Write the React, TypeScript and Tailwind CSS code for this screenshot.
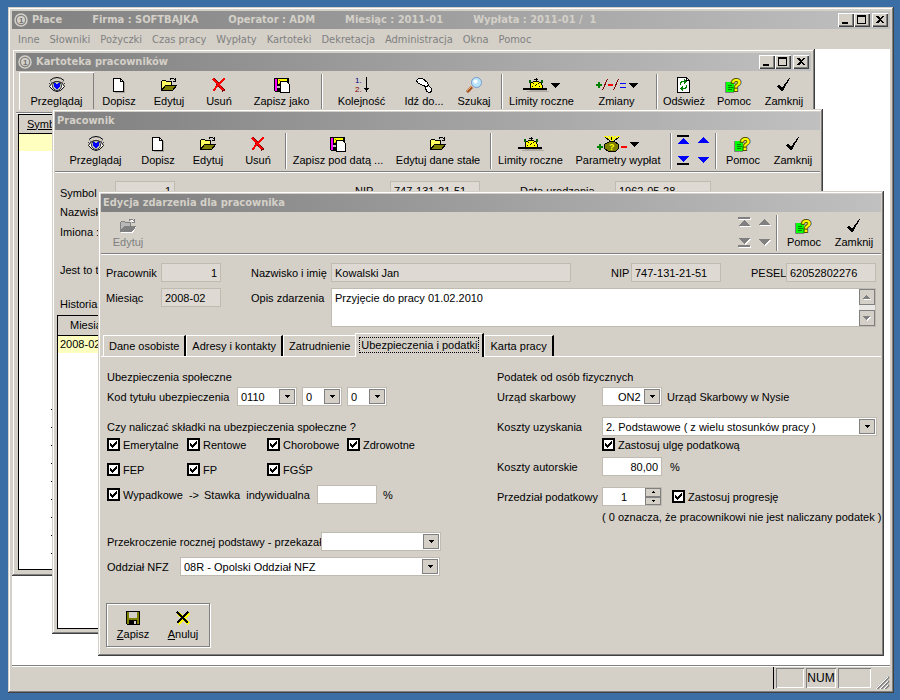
import { ReactNode } from "react";
import clsx from "clsx";

const raised = "shadow-[inset_1px_1px_#fff,inset_-1px_-1px_#404040,inset_-2px_-2px_#808080]";
const frame = "bg-[#d4d0c8] shadow-[inset_-1px_-1px_#404040,inset_1px_1px_#d4d0c8,inset_-2px_-2px_#808080,inset_2px_2px_#fff]";
const fieldBase = "h-[19px] border border-[#bfbbb0] px-[3px] outline-none";

/* ---------- icons ---------- */

function Svg({ w = 16, children }: { w?: number; children: ReactNode }) {
    return (
        <svg width={w} height={16} viewBox={`0 0 ${w} 16`} shapeRendering="crispEdges" fill="none">
            {children}
        </svg>
    );
}

function EyeIcon() {
    return (
        <svg width="16" height="16" viewBox="0 0 16 16" fill="none">
            <path d="M1 3.500Q4 0.500 8 0.500T15 3.500" stroke="#000" />
            <path d="M0.500 9.500Q3 4.500 8 4.500T15.500 9.500Q12 14.500 8 14.500T0.500 9.500Z" fill="#fff" stroke="#000" />
            <circle cx="8" cy="9" r="4.500" fill="#c0c0c0" stroke="#303030" />
            <path shapeRendering="crispEdges" d="M5 6h2v1h2v-1h2v4h-1v1h-1v1h-2v-1h-1v-1h-1z" fill="#00f" />
            <path d="M0 6L2 8M16 6L14 8M2 4.500L4 6.500M14 4.500L12 6.500" stroke="#404040" />
        </svg>
    );
}

function PageIcon() {
    return (
        <Svg w={12}>
            <path d="M2 15.500H11.500V5" stroke="#a8a49c" />
            <path d="M0.500 1.500H7.500L10.500 4.500V14.500H0.500Z" fill="#fff" stroke="#000" />
            <path d="M7.500 1.500V4.500H10.500" stroke="#000" />
        </Svg>
    );
}

function FolderIcon({ disabled = false }: { disabled?: boolean }) {
    const line = disabled ? "#808080" : "#000";
    return (
        <Svg>
            {disabled && <path d="M1 14.500H12.500L16 8.500M10 3.500L12 2.500L15 5" stroke="#fff" />}
            <path d="M0.500 13.500V4.500L1.500 3.500H4.500L5.500 4.500H10.500V8" fill={disabled ? "#b8b8b8" : "#ffff60"} stroke={line} />
            <path d="M0.500 13.500L4.500 8.500H15.500L11.500 13.500Z" fill={disabled ? "#808080" : "#808000"} stroke={line} />
            <path d="M9 2.500L10 1.500H12.500L14.500 3.500M14.500 1V4.500H11.500" stroke={line} />
        </Svg>
    );
}

function DeleteIcon() {
    return (
        <Svg w={14}>
            <path d="M1.500 2L6 7L12 14" stroke="#800000" strokeWidth="3" />
            <path d="M1 2L6 7L11 13M13 1.500L9 5L5 9L1.500 14" stroke="#f00" strokeWidth="2" />
        </Svg>
    );
}

function SaveAsIcon() {
    return (
        <Svg>
            <path d="M0.500 1.500H14.500V14.500H1.500L0.500 13.500Z" fill="#000" stroke="#000" />
            <path d="M1 2H3V14H1Z" fill="#f0f" />
            <path d="M4 2H13V7H4Z" fill="#ff0" />
            <path d="M5 3.500H6M8 4.500H9M5 6.500H6" stroke="#808000" />
            <path d="M3 9H6V11H3Z" fill="#c0c0c0" />
            <path d="M6.500 4.500H12.500L15.500 7.500V15.500H6.500Z" fill="#fff" stroke="#000" />
        </Svg>
    );
}

function SortIcon() {
    return (
        <svg width="14" height="20" viewBox="0 -1 14 20" shapeRendering="crispEdges">
            <text x="0" y="7" fontSize="8" fontFamily="Liberation Sans" fill="#000080">1.</text>
            <text x="0" y="16" fontSize="8" fontFamily="Liberation Sans" fill="#800000">2.</text>
            <path d="M11 1H12V12H14L11.500 16L9 12H11Z" />
        </svg>
    );
}

function FootIcon() {
    return (
        <Svg>
            <path d="M0.500 3.500L2.500 1.500H6.500L11.500 5.500L12.500 8.500L10.500 9.500L6.500 8.500L1.500 5.500Z" fill="#fff" stroke="#000" />
            <path d="M9.500 10.500L12.500 8.500L15.500 11.500V14.500L13.500 15.500L10.500 14.500Z" fill="#fff" stroke="#000" />
        </Svg>
    );
}

function SearchIcon() {
    return (
        <svg width="16" height="16" viewBox="0 0 16 16" fill="none">
            <path d="M1 15L6 10" stroke="#a05020" strokeWidth="3" />
            <path d="M1 14L5.500 9.500" stroke="#f0a060" />
            <circle cx="10.500" cy="5.500" r="5" fill="#b8e4fc" stroke="#7898c8" />
            <circle cx="9.500" cy="4.500" r="2" fill="#fff" />
        </svg>
    );
}

function LimitsIcon() {
    return (
        <Svg w={26}>
            <path d="M4 14.500H26M7 13.500H24" stroke="#b0aca4" />
            <path d="M7 11V8L8 6L10 4.500H16L18 6L19 8V11Z" fill="#ff0" />
            <path d="M7 11V8M7.500 8V6M8 5.500H10M10 4.500H16M16 5.500H18M18.500 6V8M19 8V11M11 2.500H15M13 1V4" stroke="#000" />
            <path d="M0 11H24V13H0Z" fill="#000" />
            <path d="M10.500 6V7M15.500 6V7M9 9.500H10M16 9.500H17M14 7L12 9" stroke="#000" />
            <path d="M6 3H8V6H6ZM18 3H20V6H18Z" fill="#006000" />
        </Svg>
    );
}

function ChangesIcon() {
    return (
        <Svg w={31}>
            <path d="M0 8H6M3 5V11" stroke="#008000" strokeWidth="2" />
            <path d="M6.500 13L11.500 2M17.500 13L22.500 2" stroke="#800000" />
            <path d="M12 8H17" stroke="#f00" strokeWidth="2" />
            <path d="M24 6.500H30M24 10.500H30" stroke="#00f" />
        </Svg>
    );
}

function RefreshIcon() {
    return (
        <Svg w={14}>
            <path d="M0.500 0.500H9.500L12.500 3.500V15.500H0.500Z" fill="#fff" stroke="#000" />
            <path d="M9.500 0.500V3.500H12.500" stroke="#000" />
            <path d="M3.500 8V6L5 4.500H8M9.500 8V10L8 11.500H5" stroke="#008000" />
            <path d="M7 2V7L10 4.500ZM6 9V14L3 11.500Z" fill="#008000" />
        </Svg>
    );
}

function HelpIcon() {
    return (
        <svg width="18" height="22" viewBox="0 -3 18 22" fill="none">
            <path d="M1 5H9V16H1Z" fill="#0f0" />
            <path d="M0.500 5V15.500H9" stroke="#808080" />
            <path d="M3 8.500H7M3 10.500H8M3 12.500H7" stroke="#008000" />
            <text x="6" y="14" fontSize="17" fontWeight="bold" fontFamily="Liberation Sans" fill="#ff0" stroke="#505000" strokeWidth="2" paintOrder="stroke">?</text>
        </svg>
    );
}

function CheckIcon() {
    return (
        <Svg w={14}>
            <path d="M0 9L2 8L5 11L12 1H13L6 14H4Z" fill="#000" />
        </Svg>
    );
}

function BagIcon() {
    return (
        <Svg w={31}>
            <path d="M0 11H6M3 8V14" stroke="#008000" strokeWidth="2" />
            <path d="M8 0L12 4M12 0L14 4M18 0L16 4M22 0L18 4M15 0V5" stroke="#ff0" strokeWidth="2" />
            <path d="M8 1L13 5M22 1L17 5M14 1L15 4" stroke="#000" />
            <path d="M12.500 5.500H17.500L21.500 8.500V12.500L18.500 15.500H11.500L7.500 12.500V8.500Z" fill="#808000" stroke="#000" />
            <text x="12" y="14" fontSize="9" fontWeight="bold" fontFamily="Liberation Sans" fill="#ff0">?</text>
            <path d="M24 11H30" stroke="#f00" strokeWidth="2" />
        </Svg>
    );
}

function FloppyIcon() {
    return (
        <Svg w={14}>
            <path d="M0.500 1.500H13.500V14.500H1.500L0.500 13.500Z" fill="#808000" stroke="#000" />
            <path d="M3 2H11V8H3Z" fill="#d4d0c8" />
            <path d="M3 10H11V15H3Z" fill="#000" />
            <path d="M8 11H10V14H8Z" fill="#d4d0c8" />
        </Svg>
    );
}

function CancelIcon() {
    return (
        <Svg w={14}>
            <path d="M2 3L13 14M13 3L2 14" stroke="#ff0" strokeWidth="3" />
            <path d="M1 2L12 13M12 2L1 13" stroke="#000" strokeWidth="2" />
        </Svg>
    );
}

function DropArrow() {
    return (
        <svg width="9" height="5" viewBox="0 0 9 5" shapeRendering="crispEdges">
            <path d="M0 0H9L4.500 5Z" />
        </svg>
    );
}

function OneIcon() {
    return (
        <svg width="14" height="14" viewBox="0 0 14 14">
            <circle cx="7" cy="7" r="6" fill="none" stroke="#d4d0c8" strokeWidth="1.500" />
            <circle cx="7" cy="7" r="4" fill="#d4d0c8" />
            <text x="5" y="10" fontSize="8" fontWeight="bold" fontFamily="Liberation Sans" fill="#707070">1</text>
        </svg>
    );
}

const arrowPaths = {
    first: "M0 0H12V2H0ZM6 3L12 9H0Z",
    prev: "M6 2L12 8H0Z",
    last: "M0 8H12V10H0ZM0 1H12L6 7Z",
    next: "M0 2H12L6 8Z",
};

function NavArrow({ kind, disabled, label }: { kind: keyof typeof arrowPaths; disabled: boolean; label: string }) {
    const edge = kind === "first" || kind === "last";
    return (
        <button aria-label={label} className="flex h-[19px] w-5 items-center justify-center">
            <svg width="13" height="11" viewBox="0 0 13 11" shapeRendering="crispEdges">
                {disabled && <path d={arrowPaths[kind]} transform="translate(1 1)" fill="#fff" />}
                <path d={arrowPaths[kind]} fill={disabled ? "#808080" : "#00f"} />
                {edge && !disabled && <path d={kind === "first" ? "M0 0H12V2H0Z" : "M0 8H12V10H0Z"} />}
            </svg>
        </button>
    );
}

function NavArrows({ disabled = false }: { disabled?: boolean }) {
    return (
        <div className="grid w-10 grid-cols-2 content-between pb-0.5">
            <NavArrow kind="first" disabled={disabled} label="Pierwszy" />
            <NavArrow kind="prev" disabled={disabled} label="Poprzedni" />
            <NavArrow kind="last" disabled={disabled} label="Ostatni" />
            <NavArrow kind="next" disabled={disabled} label="Następny" />
        </div>
    );
}

/* ---------- window parts ---------- */

function WindowButtons() {
    const button = clsx("flex h-[14px] w-4 items-center justify-center bg-[#d4d0c8]", raised);
    return (
        <div className="ml-auto flex">
            <button className={button} aria-label="Minimalizuj">
                <svg width="10" height="10" shapeRendering="crispEdges"><path d="M1 7H7V9H1Z" /></svg>
            </button>
            <button className={button} aria-label="Maksymalizuj">
                <svg width="10" height="10" shapeRendering="crispEdges"><path d="M0 0H9V9H0ZM1 2V8H8V2Z" fillRule="evenodd" /></svg>
            </button>
            <button className={clsx(button, "ml-0.5")} aria-label="Zamknij">
                <svg width="10" height="10" shapeRendering="crispEdges"><path d="M1 1H3L5 3L7 1H9L6 4.500L9 8H7L5 6L3 8H1L4 4.500Z" /></svg>
            </button>
        </div>
    );
}

function TitleBar({ children, controls = false }: { children: ReactNode; controls?: boolean }) {
    return (
        <div className="flex h-[18px] shrink-0 items-center bg-linear-to-r from-[#808080] to-[#c0c0c0] px-0.5 font-['DejaVu_Sans_Condensed','DejaVu_Sans',sans-serif] font-bold text-[#d4d0c8]">
            {children}
            {controls && <WindowButtons />}
        </div>
    );
}

function Toolbar({ children }: { children: ReactNode }) {
    return (
        <div className="flex h-[43px] shrink-0 border-b border-white pt-px shadow-[inset_0_-1px_#808080]">
            {children}
        </div>
    );
}

function Separator() {
    return <div className="mx-0.5 mt-0.5 h-9 w-px bg-[#808080] shadow-[1px_0_#fff]" />;
}

type ToolProps = { icon: ReactNode; label: ReactNode; size?: string; drop?: boolean; className?: string };

function Tool({ icon, label, size = "w-[50px]", drop, className }: ToolProps) {
    return (
        <button className={clsx("flex h-[38px] shrink-0 flex-col items-center gap-px pt-[5px] leading-[14px] whitespace-nowrap", size, className)}>
            <span className="flex h-4 items-center gap-0.5">
                {icon}
                {drop && <DropArrow />}
            </span>
            <span>{label}</span>
        </button>
    );
}

/* ---------- form parts ---------- */

type FieldProps = { id: string; label: string; value: string; labelSize: string; size: string; right?: boolean; disabled?: boolean };

function Field({ id, label, value, labelSize, size, right, disabled = true }: FieldProps) {
    return (
        <div className="flex items-center">
            <label htmlFor={id} className={clsx("whitespace-nowrap", labelSize)}>{label}</label>
            <input
                id={id}
                readOnly={disabled}
                defaultValue={value}
                className={clsx(fieldBase, size, right && "text-right", disabled ? "bg-[#dedad3]" : "bg-white")}
            />
        </div>
    );
}

function Select({ id, value, size, label, right }: { id: string; value: string; size: string; label?: string; right?: boolean }) {
    return (
        <div className={clsx("relative", size)}>
            <select
                id={id}
                aria-label={label}
                defaultValue={value}
                className={clsx(fieldBase, "block w-full appearance-none bg-white", right && "pl-[15px]")}
            >
                <option>{value}</option>
            </select>
            <span className="pointer-events-none absolute top-0.5 right-0.5 flex h-[15px] w-4 items-center justify-center border border-[#808080] bg-[#d4d0c8]">
                <svg width="5" height="3" shapeRendering="crispEdges"><path d="M0 0H5V1H4V2H3V3H2V2H1V1H0Z" /></svg>
            </span>
        </div>
    );
}

function Check({ label, className }: { label: string; className?: string }) {
    return (
        <label className={clsx("flex items-center gap-[3px] whitespace-pre", className)}>
            <span className="relative flex">
                <input type="checkbox" defaultChecked className="peer size-[13px] appearance-none border-2 border-black bg-white" />
                <svg className="pointer-events-none absolute top-[3px] left-[3px] hidden peer-checked:block" width="7" height="7" shapeRendering="crispEdges">
                    <path d="M0 2H1V3H2V4H3V3H4V2H5V1H6V0H7V3H6V4H5V5H4V6H3V7H2V6H1V5H0Z" />
                </svg>
            </span>
            {label}
        </label>
    );
}

const menu = ["Inne", "Słowniki", "Pożyczki", "Czas pracy", "Wypłaty", "Kartoteki", "Dekretacja", "Administracja", "Okna", "Pomoc"];
const tabs = ["Dane osobiste", "Adresy i kontakty", "Zatrudnienie", "Ubezpieczenia i podatki", "Karta pracy"];
const emptyRows = Array.from({ length: 23 }, (_, i) => i);

/* ---------- windows ---------- */

function EmployeeListWindow() {
    return (
        <section className={clsx("absolute top-0 left-0 flex h-[527px] w-[803px] flex-col p-1", frame)}>
            <TitleBar controls>
                <OneIcon />
                <h2 className="ml-1">Kartoteka pracowników</h2>
            </TitleBar>
            <Toolbar>
                <Tool icon={<EyeIcon />} label="Przeglądaj" size="w-[75px]" className="ml-[3px] shadow-[inset_1px_1px_#fff,inset_-1px_0_#808080]" />
                <Tool icon={<PageIcon />} label="Dopisz" />
                <Tool icon={<FolderIcon />} label="Edytuj" />
                <Tool icon={<DeleteIcon />} label="Usuń" />
                <Tool icon={<SaveAsIcon />} label="Zapisz jako" size="w-[75px]" />
                <Separator />
                <Tool icon={<SortIcon />} label="Kolejność" size="w-[75px]" />
                <Tool icon={<FootIcon />} label="Idź do..." />
                <Tool icon={<SearchIcon />} label="Szukaj" />
                <Separator />
                <Tool icon={<LimitsIcon />} label="Limity roczne" size="w-[75px]" drop />
                <Tool icon={<ChangesIcon />} label="Zmiany" size="w-[75px]" drop />
                <Separator />
                <Tool icon={<RefreshIcon />} label="Odśwież" />
                <Tool icon={<HelpIcon />} label="Pomoc" />
                <Tool icon={<CheckIcon />} label="Zamknij" />
            </Toolbar>
            <div className="mx-0.5 mb-0.5 grow border border-black bg-white">
                <table className="w-full border-collapse">
                    <thead>
                        <tr className="h-[18px] border-b border-black bg-[#d4d0c8]">
                            <th className="pl-2 text-left font-normal underline">Symbol</th>
                        </tr>
                    </thead>
                    <tbody>
                        <tr className="h-[18px] bg-[#ffffc0]"><td /></tr>
                        {emptyRows.map((row) => (
                            <tr key={row} className="h-[18px]">
                                <td className="pb-1.5 pl-8">{row > 13 && <div className="size-px bg-black" />}</td>
                            </tr>
                        ))}
                    </tbody>
                </table>
            </div>
        </section>
    );
}

function EmployeeWindow() {
    return (
        <section className={clsx("absolute top-[60px] left-10 flex h-[525px] w-[771px] flex-col p-[3px]", frame)}>
            <TitleBar><h2>Pracownik</h2></TitleBar>
            <Toolbar>
                <Tool icon={<EyeIcon />} label="Przeglądaj" size="w-[75px]" className="ml-[3px]" />
                <Tool icon={<PageIcon />} label="Dopisz" />
                <Tool icon={<FolderIcon />} label="Edytuj" />
                <Tool icon={<DeleteIcon />} label="Usuń" />
                <Separator />
                <Tool icon={<SaveAsIcon />} label="Zapisz pod datą ..." size="w-[100px]" />
                <Tool icon={<FolderIcon />} label="Edytuj dane stałe" size="w-[100px]" />
                <Separator />
                <Tool icon={<LimitsIcon />} label="Limity roczne" size="w-[75px]" />
                <Tool icon={<BagIcon />} label="Parametry wypłat" size="w-[100px]" drop />
                <Separator />
                <NavArrows />
                <Separator />
                <Tool icon={<HelpIcon />} label="Pomoc" />
                <Tool icon={<CheckIcon />} label="Zamknij" />
            </Toolbar>
            <div className="flex grow flex-col pt-2">
                <div className="flex pl-[5px]">
                    <Field id="symbol" label="Symbol" value="1" labelSize="w-[55px] pt-1" size="w-[60px]" right />
                    <Field id="nip-main" label="NIP" value="747-131-21-51" labelSize="ml-[180px] w-[35px]" size="w-[90px]" />
                    <Field id="born" label="Data urodzenia" value="1962-05-28" labelSize="ml-10 w-[95px]" size="w-24" />
                </div>
                <div className="flex flex-col pt-0.5 pl-[5px] leading-5">
                    <span>Nazwisko</span>
                    <span>Imiona :</span>
                    <span className="mt-[18px]">Jest to t</span>
                    <span className="mt-3.5">Historia</span>
                </div>
                <div className="mx-0.5 mt-px mb-0.5 grow border border-black bg-white">
                    <table className="w-full border-collapse">
                        <thead>
                            <tr className="h-[19px] border-b border-black bg-[#d4d0c8]">
                                <th className="pl-3 text-left font-normal">Miesiąc</th>
                            </tr>
                        </thead>
                        <tbody>
                            <tr className="h-[18px] bg-[#ffffc0]"><td className="pl-0.5">2008-02</td></tr>
                        </tbody>
                    </table>
                </div>
            </div>
        </section>
    );
}

function InsuranceColumn() {
    return (
        <div className="w-[390px] shrink-0">
            <h3 className="leading-5">Ubezpieczenia społeczne</h3>
            <div className="flex h-[19px] items-center">
                <label htmlFor="code" className="w-[130px]">Kod tytułu ubezpieczenia</label>
                <Select id="code" value="0110" size="w-[60px]" />
                <Select id="code2" label="Kod 2" value="0" size="ml-[5px] w-10" />
                <Select id="code3" label="Kod 3" value="0" size="ml-[5px] w-10" />
            </div>
            <p className="mt-[11px] leading-5">Czy naliczać składki na ubezpieczenia społeczne ?</p>
            <div className="flex h-[15px] items-center">
                <Check label="Emerytalne" className="w-20" />
                <Check label="Rentowe" className="w-20" />
                <Check label="Chorobowe" className="w-20" />
                <Check label="Zdrowotne" />
            </div>
            <div className="mt-2.5 flex h-[15px] items-center">
                <Check label="FEP" className="w-20" />
                <Check label="FP" className="w-20" />
                <Check label="FGŚP" />
            </div>
            <div className="mt-2 flex h-[19px] items-center">
                <Check label="Wypadkowe  ->" className="w-[97px]" />
                <label htmlFor="rate" className="w-[113px] whitespace-pre">Stawka  indywidualna</label>
                <input id="rate" className={clsx(fieldBase, "w-[60px] bg-white")} />
                <span className="ml-1.5">%</span>
            </div>
            <div className="mt-7 flex h-[19px] items-center">
                <label htmlFor="excess" className="w-[214px] whitespace-nowrap">Przekroczenie rocznej podstawy - przekazał</label>
                <Select id="excess" value="" size="w-[120px]" />
            </div>
            <div className="mt-1.5 flex h-[19px] items-center">
                <label htmlFor="nfz" className="w-[73px]">Oddział NFZ</label>
                <Select id="nfz" value="08R - Opolski Oddział NFZ" size="w-[260px]" />
            </div>
        </div>
    );
}

function TaxColumn() {
    return (
        <div className="grow">
            <h3 className="leading-5">Podatek od osób fizycznych</h3>
            <div className="flex h-[19px] items-center">
                <label htmlFor="office" className="w-[105px]">Urząd skarbowy</label>
                <Select id="office" value="ON2" size="w-[60px]" right />
                <span className="ml-[5px]">Urząd Skarbowy w Nysie</span>
            </div>
            <div className="mt-[11px] flex h-[19px] items-center">
                <label htmlFor="costs" className="w-[105px]">Koszty uzyskania</label>
                <Select id="costs" value="2. Podstawowe ( z wielu stosunków pracy )" size="w-[275px]" />
            </div>
            <Check label="Zastosuj ulgę podatkową" className="mt-px ml-[105px] h-[15px]" />
            <div className="mt-[5px] flex h-[19px] items-center">
                <Field id="author" label="Koszty autorskie" value="80,00" labelSize="w-[105px]" size="w-[60px]" right disabled={false} />
                <span className="ml-2">%</span>
            </div>
            <div className="mt-[11px] flex h-[19px] items-center">
                <label htmlFor="bracket" className="w-[105px]">Przedział podatkowy</label>
                <div className="flex h-[19px] w-[60px] border border-[#bfbbb0] bg-white">
                    <input id="bracket" defaultValue="1" className="w-[42px] bg-white text-center outline-none" />
                    <div className="flex w-4 flex-col">
                        <button aria-label="Więcej" className="flex grow items-center justify-center border border-[#808080] bg-[#d4d0c8]">
                            <svg width="3" height="2" shapeRendering="crispEdges"><path d="M1 0H2V1H3V2H0V1H1Z" /></svg>
                        </button>
                        <button aria-label="Mniej" className="flex grow items-center justify-center border border-[#808080] bg-[#d4d0c8]">
                            <svg width="3" height="2" shapeRendering="crispEdges"><path d="M0 0H3V1H2V2H1V1H0Z" /></svg>
                        </button>
                    </div>
                </div>
                <Check label="Zastosuj progresję" className="ml-2.5" />
            </div>
            <p className="mt-px ml-[105px] leading-5 whitespace-nowrap">( 0 oznacza, że pracownikowi nie jest naliczany podatek )</p>
        </div>
    );
}

function ScrollButton({ up = false }: { up?: boolean }) {
    return (
        <button aria-label={up ? "W górę" : "W dół"} className="flex h-4 w-4 items-center justify-center border border-[#808080] bg-[#d4d0c8]">
            <svg width="8" height="5" shapeRendering="crispEdges">
                <path d={up ? "M4 1L8 5H1Z" : "M1 1H8L4.500 5Z"} fill="#fff" />
                <path d={up ? "M3.500 0L7 4H0Z" : "M0 0H7L3.500 4Z"} fill="#808080" />
            </svg>
        </button>
    );
}

function EventEditWindow() {
    const active = 3;
    return (
        <section className={clsx("absolute top-[142px] left-[86px] flex h-[465px] w-[786px] flex-col p-[3px]", frame)}>
            <TitleBar><h2>Edycja zdarzenia dla pracownika</h2></TitleBar>
            <Toolbar>
                <Tool icon={<FolderIcon disabled />} label="Edytuj" className="ml-0.5 text-[#808080]" />
                <div className="ml-auto flex pr-0.5">
                    <NavArrows disabled />
                    <Separator />
                    <Tool icon={<HelpIcon />} label="Pomoc" />
                    <Tool icon={<CheckIcon />} label="Zamknij" />
                </div>
            </Toolbar>
            <div className="flex px-[5px] pt-2">
                <Field id="emp" label="Pracownik" value="1" labelSize="w-[55px]" size="w-[60px]" right />
                <Field id="name" label="Nazwisko i imię" value="Kowalski Jan" labelSize="ml-[30px] w-20" size="w-60" />
                <Field id="nip" label="NIP" value="747-131-21-51" labelSize="ml-10 w-5" size="w-[90px]" />
                <Field id="pesel" label="PESEL" value="62052802276" labelSize="ml-[30px] w-[35px]" size="w-[90px]" />
            </div>
            <div className="flex items-start px-[5px] pt-1.5">
                <Field id="month" label="Miesiąc" value="2008-02" labelSize="w-[55px]" size="w-[60px]" />
                <label htmlFor="desc" className="ml-[30px] w-20 leading-5">Opis zdarzenia</label>
                <div className="flex h-[39px] w-[545px] border border-[#bfbbb0] bg-white">
                    <textarea id="desc" defaultValue="Przyjęcie do pracy 01.02.2010" className="grow resize-none overflow-hidden px-[3px] py-0.5 outline-none" />
                    <div className="flex w-4 flex-col justify-between bg-[#eae8e4]">
                        <ScrollButton up />
                        <ScrollButton />
                    </div>
                </div>
            </div>
            <div role="tablist" className="flex h-[30px] items-end pl-0.5 shadow-[inset_0_-1px_#fff]">
                {tabs.map((tab, i) => (
                    <button
                        key={tab}
                        role="tab"
                        aria-selected={i === active}
                        className={clsx(
                            "border-t border-l border-white bg-[#d4d0c8] whitespace-nowrap",
                            i === active ? "h-6 px-[3px] pb-0.5" : "mb-px h-[21px] px-[5px]",
                            i !== active - 1 && "border-r-2 border-r-black",
                        )}
                    >
                        <span className={clsx(i === active && "block border border-dotted border-black px-px leading-[14px]")}>{tab}</span>
                    </button>
                ))}
            </div>
            <div className="flex px-1.5 pt-2.5">
                <InsuranceColumn />
                <TaxColumn />
            </div>
            <div className="mt-[27px] ml-[5px] flex h-11 w-[104px] border border-[#808080] px-px shadow-[1px_1px_#fff,inset_1px_1px_#fff]">
                <Tool icon={<FloppyIcon />} label={<><u>Z</u>apisz</>} className="mt-px" />
                <Tool icon={<CancelIcon />} label={<><u>A</u>nuluj</>} className="mt-px" />
            </div>
        </section>
    );
}

export default function App() {
    const panel = "mt-0.5 flex h-5 items-center justify-center shadow-[inset_1px_1px_#808080,inset_-1px_-1px_#fff]";
    return (
        <div className="flex h-screen bg-[#3a6ea5] pt-[7px] pr-1.5 pb-[7px] pl-2 font-['Liberation_Sans',Arial,sans-serif] text-[11px] leading-[14px] text-black">
            <main className={clsx("flex min-w-0 grow flex-col p-1", frame)}>
                <TitleBar controls>
                    <OneIcon />
                    <h1 className="ml-1 flex gap-[30px] whitespace-pre">
                        <span>Płace</span>
                        <span>Firma : SOFTBAJKA</span>
                        <span>Operator : ADM</span>
                        <span>Miesiąc : 2011-01</span>
                        <span>Wypłata : 2011-01 /  1</span>
                    </h1>
                </TitleBar>
                <nav className="flex h-5 shrink-0 items-center gap-2.5 pt-0.5 pl-1.5 font-['DejaVu_Sans_Condensed','DejaVu_Sans',sans-serif] text-[#808080]">
                    {menu.map((item) => (
                        <button key={item} className="whitespace-nowrap">{item}</button>
                    ))}
                </nav>
                <div className="relative grow overflow-hidden bg-white">
                    <EmployeeListWindow />
                    <EmployeeWindow />
                    <EventEditWindow />
                </div>
                <footer className="flex h-6 shrink-0 justify-end gap-0.5 border-t border-[#808080] shadow-[inset_0_1px_#fff]">
                    <div className="mt-px w-px bg-black" />
                    <div className={clsx(panel, "w-7")} />
                    <div className={clsx(panel, "w-[30px] text-xs")}>NUM</div>
                    <div className={clsx(panel, "w-[33px]")} />
                    <svg width="17" height="13" viewBox="0 0 17 13" className="self-end" stroke="#808080" strokeWidth="2">
                        <path d="M4 13L16 1M8 13L16 5M12 13L16 9" />
                        <path d="M3 13L15 1M7 13L15 5M11 13L15 9" stroke="#fff" strokeWidth="1" />
                    </svg>
                </footer>
            </main>
        </div>
    );
}
